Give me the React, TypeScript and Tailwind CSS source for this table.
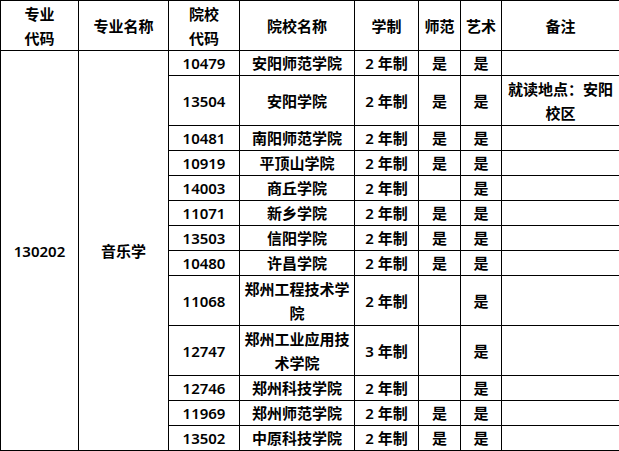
const rows = [
  { code: '10479', name: '安阳师范学院', years: '2 年制', normal: '是', art: '是', note: '', tall: false },
  { code: '13504', name: '安阳学院', years: '2 年制', normal: '是', art: '是', note: '就读地点：安阳校区', tall: true },
  { code: '10481', name: '南阳师范学院', years: '2 年制', normal: '是', art: '是', note: '', tall: false },
  { code: '10919', name: '平顶山学院', years: '2 年制', normal: '是', art: '是', note: '', tall: false },
  { code: '14003', name: '商丘学院', years: '2 年制', normal: '', art: '是', note: '', tall: false },
  { code: '11071', name: '新乡学院', years: '2 年制', normal: '是', art: '是', note: '', tall: false },
  { code: '13503', name: '信阳学院', years: '2 年制', normal: '是', art: '是', note: '', tall: false },
  { code: '10480', name: '许昌学院', years: '2 年制', normal: '是', art: '是', note: '', tall: false },
  { code: '11068', name: '郑州工程技术学院', years: '2 年制', normal: '', art: '是', note: '', tall: true },
  { code: '12747', name: '郑州工业应用技术学院', years: '3 年制', normal: '', art: '是', note: '', tall: true },
  { code: '12746', name: '郑州科技学院', years: '2 年制', normal: '', art: '是', note: '', tall: false },
  { code: '11969', name: '郑州师范学院', years: '2 年制', normal: '是', art: '是', note: '', tall: false },
  { code: '13502', name: '中原科技学院', years: '2 年制', normal: '是', art: '是', note: '', tall: false },
];

const cell = 'border border-black px-1 py-0 text-center align-middle';

export default function App() {
  return (
    <div className="w-[619px] h-[451px] bg-white text-black">
      <table
        className="w-[619px] table-fixed border-collapse text-[15px] leading-[24px] font-semibold"
        style={{ fontFamily: '"Noto Sans", "Noto Sans CJK SC", sans-serif' }}
      >
        <colgroup>
          <col className="w-[78px]" />
          <col className="w-[90px]" />
          <col className="w-[71px]" />
          <col className="w-[115px]" />
          <col className="w-[64px]" />
          <col className="w-[42px]" />
          <col className="w-[41px]" />
          <col className="w-[118px]" />
        </colgroup>
        <thead>
          <tr className="h-[50px]">
            <th className={`${cell} font-semibold`}>专业<br />代码</th>
            <th className={`${cell} font-semibold`}>专业名称</th>
            <th className={`${cell} font-semibold`}>院校<br />代码</th>
            <th className={`${cell} font-semibold`}>院校名称</th>
            <th className={`${cell} font-semibold`}>学制</th>
            <th className={`${cell} font-semibold`}>师范</th>
            <th className={`${cell} font-semibold`}>艺术</th>
            <th className={`${cell} font-semibold`}>备注</th>
          </tr>
        </thead>
        <tbody>
          {rows.map((r, i) => (
            <tr key={r.code} className={r.tall ? 'h-[50px]' : 'h-[25px]'}>
              {i === 0 && (
                <>
                  <td className={cell} rowSpan={rows.length}>130202</td>
                  <td className={cell} rowSpan={rows.length}>音乐学</td>
                </>
              )}
              <td className={cell}>{r.code}</td>
              <td className={cell}>{r.name}</td>
              <td className={cell}>{r.years}</td>
              <td className={cell}>{r.normal}</td>
              <td className={cell}>{r.art}</td>
              <td className={cell}>{r.note}</td>
            </tr>
          ))}
        </tbody>
      </table>
    </div>
  );
}
